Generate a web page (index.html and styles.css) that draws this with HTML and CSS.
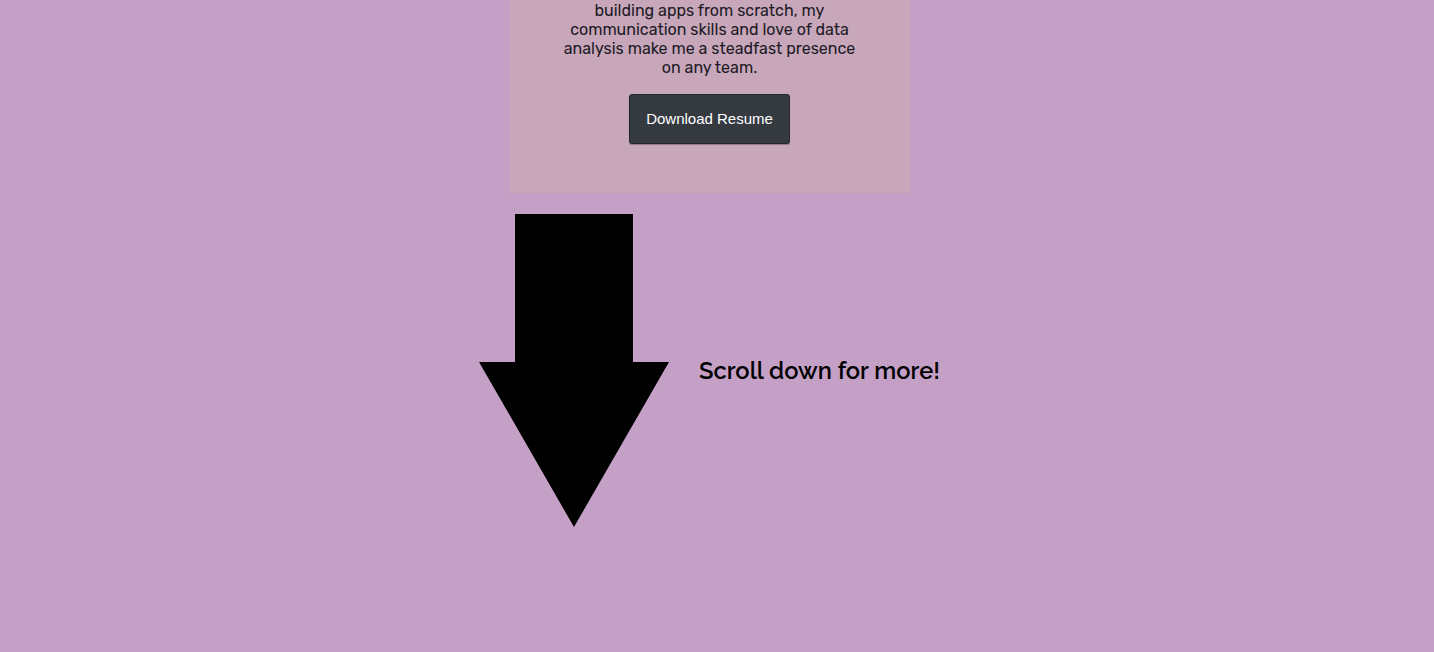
FILE: index.html
```html
<!DOCTYPE html>
<html>
<head>
<meta charset="utf-8">
<link rel="stylesheet" href="styles.css">
</head>
<body>
<section class="card">
  <p class="bio">building apps from scratch, my<br>communication skills and love of data<br>analysis make me a steadfast presence<br>on any team.</p>
  <button class="btn">Download Resume</button>
</section>
<section class="scroll">
  <svg class="arrow" width="190" height="313" viewBox="0 0 190 313">
    <polygon points="36,0 154,0 154,148 190,148 95,313 0,148 36,148" fill="#000"/>
  </svg>
  <h2 class="hint">Scroll down for more!</h2>
</section>
</body>
</html>
```
FILE: styles.css
```css
html, body {
  margin: 0;
  padding: 0;
  background: #c5a0c6;
}
body {
  display: flex;
  flex-direction: column;
  align-items: center;
  min-height: 652px;
  box-sizing: border-box;
  padding-right: 15px;
}
.card {
  width: 400px;
  box-sizing: border-box;
  background: #c8a7bb;
  display: flex;
  flex-direction: column;
  align-items: center;
  padding: 1px 0 49px;
}
.bio {
  margin: 0;
  font-family: "Rubik", "Open Sans", "Noto Sans", sans-serif;
  font-size: 16px;
  line-height: 19px;
  color: #1c1a24;
  text-align: center;
}
.btn {
  margin-top: 17px;
  width: 161px;
  height: 50px;
  padding: 0 0 2px;
  background: #343a40;
  color: #fff;
  border: 1px solid #23272b;
  border-radius: 3px;
  font-family: "Liberation Sans", Arial, sans-serif;
  font-size: 15px;
  box-shadow: 0 1px 1px rgba(0,0,0,0.3);
}
.scroll {
  margin-top: 21px;
  display: flex;
  align-items: center;
  gap: 30px;
}
.arrow {
  display: block;
}
.hint {
  margin: 0;
  font-family: "Raleway", "Lato", sans-serif;
  font-weight: 600;
  font-size: 23.7px;
  color: #000;
}
```
